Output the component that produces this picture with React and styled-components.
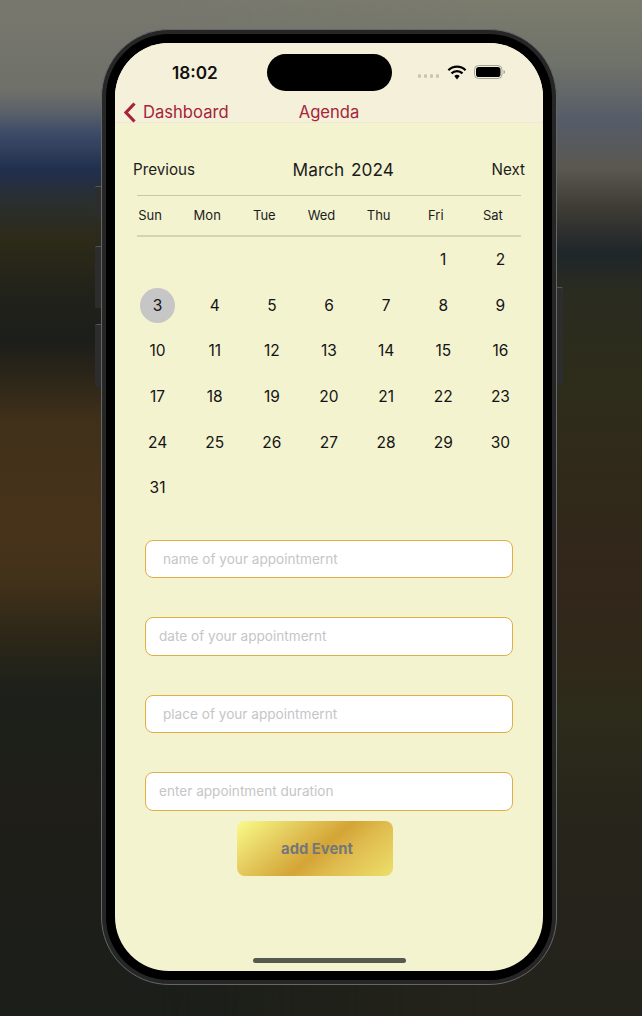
import React from "react";
import styled, { createGlobalStyle } from "styled-components";

const Global = createGlobalStyle`
  html, body { margin: 0; padding: 0; background: #1c1f1a; }
  * { box-sizing: border-box; }
`;

const Desktop = styled.div`
  position: relative;
  width: 642px;
  height: 1016px;
  overflow: hidden;
  padding: 29px 0 0 101px;
  font-family: Inter, "Liberation Sans", sans-serif;
  background-image: linear-gradient(180deg, #78786e 0, #6f7069 90px, #5a6168 112px, #3f4c68 132px, #212f4f 170px, #2a2f30 200px, #2d2a18 240px, #20211a 300px, #1c1e1a 340px, #2d2618 380px, #40301a 420px, #47331a 518px, #43321a 577px, #2c2718 636px, #1c201a 695px, #1f1e18 793px, #1b1e19 1016px);
  &::before {
    content: "";
    position: absolute;
    inset: 0;
    background-image: linear-gradient(180deg, #7b7c6e 0, #6f7269 65px, #555b68 123px, #5a5850 168px, #3f3c35 207px, #1f2629 253px, #2a2c20 292px, #2e2c1a 389px, #33261a 583px, #2d2b1a 713px, #26241b 842px, #24231b 1016px);
    mask-image: linear-gradient(90deg, transparent 25%, #000 75%);
  }
`;

const Phone = styled.div`
  position: relative;
  width: 456px;
  height: 956px;
  padding: 4px;
  border: 1px solid #646668;
  border-radius: 68px;
  background: #262627;
`;

const SideButton = styled.span`
  position: absolute;
  top: ${(p) => p.$top}px;
  ${(p) => (p.$right ? "right: -7px;" : "left: -7px;")}
  width: 6px;
  height: ${(p) => p.$h}px;
  background: #2d2d2e;
  border-top: 1px solid #55565a;
  border-radius: ${(p) => (p.$right ? "0 2px 2px 0" : "2px 0 0 2px")};
`;

const Bezel = styled.div`
  height: 100%;
  padding: 9px;
  border-radius: 63px;
  background: #000;
`;

const Screen = styled.div`
  position: relative;
  width: 428px;
  height: 928px;
  display: flex;
  flex-direction: column;
  overflow: hidden;
  border-radius: 54px;
  background: #f3f3d0;
  color: #1a1a1a;
`;

const Island = styled.div`
  position: absolute;
  top: 11px;
  left: 152px;
  width: 125px;
  height: 37px;
  border-radius: 19px;
  background: #000;
`;

const NavBar = styled.header`
  height: 80px;
  flex: none;
  background: #f5f0da;
  border-bottom: 1px solid #ece9d3;
`;

const StatusBar = styled.div`
  height: 58px;
  display: flex;
  align-items: center;
  padding: 0 37px 0 57px;
`;

const Clock = styled.span`
  font-size: 17.2px;
  font-weight: 600;
  color: #111;
  margin-right: auto;
`;

const Dots = styled.span`
  display: flex;
  gap: 2.5px;
  margin: 8px 8px 0 0;
`;

const Dot = styled.i`
  width: 3.5px;
  height: 3.5px;
  border-radius: 50%;
  background: #c9c5b2;
`;

const NavRow = styled.div`
  height: 22px;
  display: grid;
  grid-template-columns: 1fr auto 1fr;
  align-items: center;
  color: #a5243a;
  font-size: 16.6px;
`;

const Back = styled.span`
  display: flex;
  align-items: center;
  gap: 6px;
  padding-left: 8px;
`;

const MonthBar = styled.div`
  display: flex;
  align-items: center;
  justify-content: space-between;
  height: 24px;
  margin-top: 34px;
  padding: 0 18px;
  font-size: 15.2px;
  color: #1c1c1c;
`;

const MonthTitle = styled.span`
  font-size: 17.3px;
  word-spacing: 2px;
`;

const WeekBar = styled.div`
  height: 42px;
  margin: 14px 22px 0;
  padding-bottom: 1px;
  border-top: 1px solid #c9c8a6;
  border-bottom: 2px solid #d5d4b5;
`;

const WeekGrid = styled.div`
  width: 400px;
  height: 100%;
  margin-left: -15.5px;
  display: grid;
  grid-template-columns: repeat(7, 1fr);
  align-items: center;
  justify-items: center;
  font-size: 13px;
  color: #1c1c1c;
`;

const DayGrid = styled.div`
  width: 400px;
  margin-left: 14px;
  display: grid;
  grid-template-columns: repeat(7, 1fr);
  grid-auto-rows: 45.6px;
  align-items: center;
  justify-items: center;
  font-size: 15.5px;
  color: #141414;
`;

const Day = styled.span`
  width: 35px;
  height: 35px;
  display: flex;
  align-items: center;
  justify-content: center;
  border-radius: 50%;
  grid-column-start: ${(p) => p.$start || "auto"};
  background: ${(p) => (p.$selected ? "#c6c6c6" : "transparent")};
`;

const Form = styled.form`
  display: flex;
  flex-direction: column;
  gap: 38.8px;
  margin: 29px 30px 0;
`;

const Field = styled.input`
  display: block;
  width: 368px;
  height: 38.7px;
  padding: 0 0 0 ${(p) => p.$pad}px;
  border: 1px solid #dfae45;
  border-radius: 8px;
  background: #fff;
  font: 13.6px Inter, "Liberation Sans", sans-serif;
  outline: none;
  &::placeholder {
    color: #c5c5c7;
    opacity: 1;
  }
`;

const AddButton = styled.button`
  display: block;
  width: 156px;
  height: 55px;
  margin: 10.5px 0 0 122px;
  padding: 0 0 0 4px;
  border: 0;
  border-radius: 8px;
  background: linear-gradient(140deg, #f6f584 4%, #e2c558 32%, #d4a436 53%, #e0bd50 70%, #ecdf6a 100%);
  font: 700 14.8px Inter, "Liberation Sans", sans-serif;
  color: #74777a;
`;

const HomeBar = styled.div`
  width: 153px;
  height: 5px;
  flex: none;
  margin: auto auto 8px;
  border-radius: 3px;
  background: #565a4e;
`;

const Wifi = () => (
  <svg width="20" height="15" viewBox="0 0 20 15" aria-hidden="true">
    <path d="M1.4 5.2a12.3 12.3 0 0 1 17.2 0" fill="none" stroke="#000" strokeWidth="2.3" />
    <path d="M4.5 8.4a8 8 0 0 1 11 0" fill="none" stroke="#000" strokeWidth="2.3" />
    <path d="M7.3 11.1a4 4 0 0 1 5.4 0L10 14.4z" fill="#000" />
  </svg>
);

const Battery = () => (
  <svg width="32" height="14" viewBox="0 0 32 14" aria-hidden="true" style={{ marginLeft: 7 }}>
    <rect x="0.5" y="0.5" width="27.5" height="13" rx="4" fill="none" stroke="#a9a592" />
    <rect x="2" y="2" width="24.5" height="10" rx="2.8" fill="#000" />
    <path d="M29.5 5v4c1-.3 1.5-1 1.5-2s-.5-1.7-1.5-2z" fill="#a9a592" />
  </svg>
);

const Chevron = () => (
  <svg width="14" height="21" viewBox="0 0 14 21" aria-hidden="true">
    <path d="M11.5 1.5 3 10.5l8.5 9" fill="none" stroke="#a5243a" strokeWidth="3.2" />
  </svg>
);

const weekdays = ["Sun", "Mon", "Tue", "Wed", "Thu", "Fri", "Sat"];
const days = Array.from({ length: 31 }, (_, i) => i + 1);
const fields = [
  ["name of your appointmernt", 17],
  ["date of your appointmernt", 13],
  ["place of your appointmernt", 17],
  ["enter appointment duration", 13],
];

export default function App() {
  return (
    <Desktop>
      <Global />
      <Phone>
        <SideButton $top={156} $h={32} />
        <SideButton $top={216} $h={62} />
        <SideButton $top={294} $h={63} />
        <SideButton $right $top={257} $h={98} />
        <Bezel>
          <Screen>
            <Island />
            <NavBar>
              <StatusBar>
                <Clock>18:02</Clock>
                <Dots>
                  <Dot />
                  <Dot />
                  <Dot />
                  <Dot />
                </Dots>
                <Wifi />
                <Battery />
              </StatusBar>
              <NavRow>
                <Back>
                  <Chevron />
                  Dashboard
                </Back>
                <span>Agenda</span>
              </NavRow>
            </NavBar>
            <MonthBar>
              <span>Previous</span>
              <MonthTitle>March 2024</MonthTitle>
              <span>Next</span>
            </MonthBar>
            <WeekBar>
              <WeekGrid>
                {weekdays.map((d) => (
                  <span key={d}>{d}</span>
                ))}
              </WeekGrid>
            </WeekBar>
            <DayGrid>
              {days.map((d) => (
                <Day key={d} $start={d === 1 ? 6 : undefined} $selected={d === 3}>
                  {d}
                </Day>
              ))}
            </DayGrid>
            <Form>
              {fields.map(([text, pad]) => (
                <Field key={text} placeholder={text} $pad={pad} />
              ))}
            </Form>
            <AddButton type="button">add Event</AddButton>
            <HomeBar />
          </Screen>
        </Bezel>
      </Phone>
    </Desktop>
  );
}
